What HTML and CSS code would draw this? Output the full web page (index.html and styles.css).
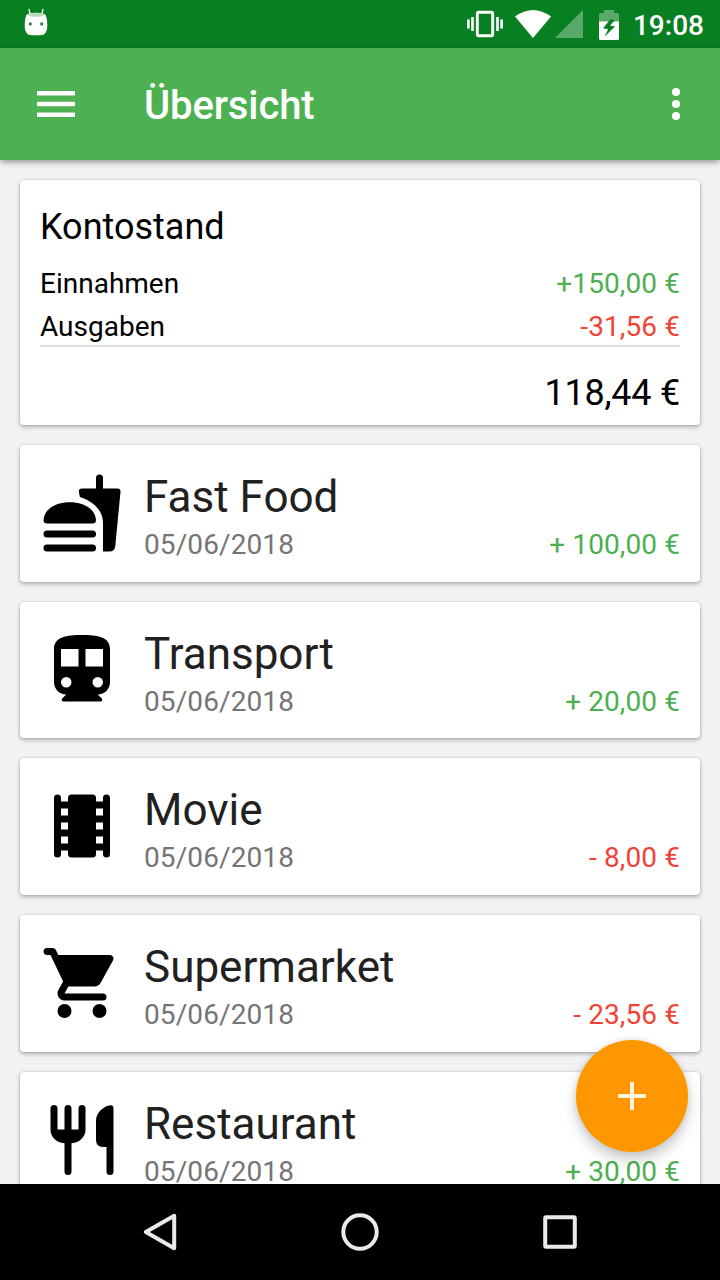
FILE: index.html
```html
<!DOCTYPE html>
<html lang="de">
<head>
<meta charset="utf-8">
<title>Übersicht</title>
<link rel="stylesheet" href="styles.css">
</head>
<body>
<div class="screen">
  <div class="statusbar">
    <svg class="statusbar-robot" width="24" height="28" viewBox="0 0 24 28">
      <path d="M5 1.500l1.300 5M19 1.500l-1.300 5" fill="none" stroke="#fff" stroke-width="1.300" stroke-linecap="round"/>
      <path d="M3.500 6Q12 3.500 20.500 6Q23 7.500 23.300 17Q23.300 25 19.500 26.700Q12 28 4.500 26.700Q.7 25 .7 17Q1 7.500 3.500 6z" fill="#fff"/>
      <ellipse cx="12" cy="6.800" rx="8" ry="1.900" fill="#b7dcbc"/>
      <circle cx="6.300" cy="15.900" r="1.600" fill="#2f7d3a"/><circle cx="17.700" cy="15.900" r="1.600" fill="#2f7d3a"/>
    </svg>
    <div class="statusbar-right">
      <svg class="icon-vibrate" width="36" height="28" viewBox="0 0 36 28" fill="#fff">
        <path d="M0 9.500h2.700v9H0zM4.200 7h2.600v14H4.200zM29.200 7h2.600v14h-2.600zM33.300 9.500H36v9h-2.700z"/>
        <rect x="10.300" y="2.200" width="15.400" height="23.600" rx="1.500" fill="none" stroke="#fff" stroke-width="2.900"/>
      </svg>
      <svg class="icon-wifi" width="36" height="28" viewBox="0 0 36 28"><path d="M0 6.500Q18-6.500 36 6.500L18 28z" fill="#fff"/></svg>
      <svg class="icon-signal" width="28" height="28" viewBox="0 0 28 28"><path d="M28 0v28H0z" fill="#5aa96a"/></svg>
      <svg class="icon-battery" width="20" height="30" viewBox="0 0 20 30">
        <path d="M0 12V4.500Q0 3 1.500 3H5V0h10v3h3.500Q20 3 20 4.500V12z" fill="#5aa96a"/>
        <path d="M0 11.500h20V28.500Q20 30 18.500 30h-17Q0 30 0 28.500z" fill="#fff"/>
        <path d="M11.500 9L4 18.300l5.200.9L5.500 26.700 16 16.500l-5-1 4.700-5.200z" fill="#088022"/>
      </svg>
      <span class="clock">19:08</span>
    </div>
  </div>
  <header class="appbar">
    <svg class="menu-icon" width="38" height="26" viewBox="0 0 38 26"><path d="M0 0h38v4.400H0zM0 10.800h38v4.400H0zM0 21.600h38V26H0z" fill="#fff"/></svg>
    <h1 class="appbar-title">Übersicht</h1>
    <svg class="more-icon" width="8" height="32" viewBox="0 0 8 32" fill="#fff"><circle cx="4" cy="4" r="4"/><circle cx="4" cy="16" r="4"/><circle cx="4" cy="28" r="4"/></svg>
  </header>
  <main class="content">
    <section class="card balance">
      <h2 class="balance-title">Kontostand</h2>
      <div class="balance-row"><span>Einnahmen</span><span class="income">+150,00 €</span></div>
      <div class="balance-row balance-row-last"><span>Ausgaben</span><span class="expense">-31,56 €</span></div>
      <div class="balance-total">118,44 €</div>
    </section>
    <article class="card entry">
      <svg class="entry-icon" viewBox="0 0 24 24">
        <path d="M16 5V2a1 1 0 0 1 2 0v3h4.200q.8 0 .8.900L21.500 21.500Q21.300 23 19.800 23H18v-8c0-2.400-1-4-2.400-5.300-1.200-1.100-2.600-1.800-4.200-2.300L11.100 6Q11 5 12 5z"/>
        <path d="M2 15Q1 15 1 14C1.300 10.500 5 8.950 8.500 8.950S15.700 10.500 16 14Q16 15 15 15z"/>
        <rect x="1" y="17" width="15" height="2" rx="1"/><rect x="1" y="21" width="15" height="2" rx="1"/>
      </svg>
      <div class="entry-body"><h3 class="entry-title">Fast Food</h3><div class="entry-meta"><span class="date">05/06/2018</span><span class="income">+ 100,00 €</span></div></div>
    </article>
    <article class="card entry">
      <svg class="entry-icon" viewBox="0 0 24 24"><path fill-rule="evenodd" d="M12 2c-4.420 0-8 .5-8 4v9.500C4 17.430 5.570 19 7.500 19l-1.150 1.150c-.32.32-.1.850.35.850h10.600c.450 0 .670-.53.350-.850L16.500 19c1.930 0 3.500-1.570 3.500-3.500V6c0-3.500-3.580-4-8-4zM7.500 17a1.500 1.500 0 1 1 0-3 1.500 1.500 0 0 1 0 3zM11 11H6V6h5zM16.500 17a1.500 1.500 0 1 1 0-3 1.500 1.500 0 0 1 0 3zM18 11h-5V6h5z"/></svg>
      <div class="entry-body"><h3 class="entry-title">Transport</h3><div class="entry-meta"><span class="date">05/06/2018</span><span class="income">+ 20,00 €</span></div></div>
    </article>
    <article class="card entry">
      <svg class="entry-icon" viewBox="0 0 24 24"><path d="M4 4a1 1 0 0 1 2 0v16a1 1 0 0 1-2 0zM18 4a1 1 0 0 1 2 0v16a1 1 0 0 1-2 0zM5 5h14v2H5zM5 9h14v2H5zM5 13h14v2H5zM5 17h14v2H5z"/><rect x="8" y="3" width="8" height="18" rx="1"/></svg>
      <div class="entry-body"><h3 class="entry-title">Movie</h3><div class="entry-meta"><span class="date">05/06/2018</span><span class="expense">- 8,00 €</span></div></div>
    </article>
    <article class="card entry">
      <svg class="entry-icon" viewBox="0 0 24 24"><circle cx="7" cy="20" r="2"/><circle cx="17" cy="20" r="2"/><path d="M1 3c0 .55.450 1 1 1h1l3.600 7.590-1.350 2.440C4.520 15.370 5.480 17 7 17h11a1 1 0 0 0 0-2H7l1.100-2h7.450c.750 0 1.410-.41 1.750-1.030l3.580-6.490A1 1 0 0 0 20 4H5.210l-.67-1.430A1 1 0 0 0 3.640 2H2c-.55 0-1 .450-1 1z"/></svg>
      <div class="entry-body"><h3 class="entry-title">Supermarket</h3><div class="entry-meta"><span class="date">05/06/2018</span><span class="expense">- 23,56 €</span></div></div>
    </article>
    <article class="card entry">
      <svg class="entry-icon" viewBox="0 0 24 24"><path d="M3 3a1 1 0 0 1 2 0v6h2V3a1 1 0 0 1 2 0v6h2V3a1 1 0 0 1 2 0v6c0 2.100-1.700 3.800-4 3.920V21a1 1 0 0 1-2 0v-8.080C4.700 12.800 3 11.100 3 9zM16 6.500C16 4.300 18.100 2.300 20.200 2.100Q21 2.100 21 3v18a1 1 0 0 1-2 0v-7h-1q-2 0-2-2z"/></svg>
      <div class="entry-body"><h3 class="entry-title">Restaurant</h3><div class="entry-meta"><span class="date">05/06/2018</span><span class="income">+ 30,00 €</span></div></div>
    </article>
    <button class="fab" aria-label="Neu"><svg width="28" height="28" viewBox="0 0 28 28"><path d="M12 0h4v12h12v4H16v12h-4V16H0v-4h12z" fill="#fff3dc"/></svg></button>
  </main>
  <nav class="navbar">
    <svg width="40" height="40" viewBox="0 0 40 40"><path d="M34.200 3.800v32.400L5.800 20z"/></svg>
    <svg width="40" height="40" viewBox="0 0 40 40"><circle cx="20" cy="20" r="16.700"/></svg>
    <svg width="40" height="40" viewBox="0 0 40 40"><rect x="5.200" y="5.200" width="29.600" height="29.600" rx="1"/></svg>
  </nav>
</div>
</body>
</html>
```

FILE: styles.css
```css
* { box-sizing: border-box; }
body { margin: 0; font-family: Roboto, "Liberation Sans", sans-serif; background: #f2f2f2; }
h1, h2, h3 { margin: 0; font-weight: 400; }
svg { display: block; flex: none; }

.screen { width: 720px; height: 1280px; display: flex; flex-direction: column; overflow: hidden; }

.statusbar { height: 48px; flex: none; background: #088022; display: flex; justify-content: space-between; align-items: flex-start; padding: 8px 16px 0 24px; }
.statusbar-right { display: flex; align-items: flex-start; padding-top: 2px; }
.icon-wifi { margin-left: 12px; }
.icon-signal { margin-left: 4px; }
.icon-battery { margin-left: 16px; }
.clock { margin-left: 14px; color: #fff; font-size: 28px; font-weight: 500; line-height: 32px; }

.appbar { height: 112px; flex: none; z-index: 1; background: #4db151; display: flex; align-items: center; padding: 0 40px 0 37px; box-shadow: 0 2px 6px rgba(0, 0, 0, .4); }
.appbar-title { margin: 4px auto 0 69px; color: #fff; font-size: 40px; font-weight: 500; line-height: 48px; letter-spacing: -.1px; }

.content { height: 1024px; flex: none; position: relative; overflow: hidden; background: #f2f2f2; padding: 20px; display: flex; flex-direction: column; gap: 20px; }
.card { flex: none; background: #fff; border-radius: 4px; box-shadow: 0 2px 4px rgba(0, 0, 0, .28), 0 0 2px rgba(0, 0, 0, .18); }

.balance { height: 245px; padding: 26px 20px 0; color: #000; }
.balance-title { font-size: 36px; line-height: 42px; margin-bottom: 19px; }
.balance-row { display: flex; justify-content: space-between; font-size: 28px; line-height: 33px; margin-bottom: 10px; }
.balance-row-last { height: 37px; margin-bottom: 25px; border-bottom: 2px solid #dcdcdc; }
.balance-total { font-size: 36px; line-height: 42px; text-align: right; letter-spacing: -.25px; }

.income { color: #4caf50; letter-spacing: .1px; }
.expense { color: #f04336; letter-spacing: .1px; }

.entry { height: 136.670px; display: flex; gap: 20px; padding: 26px 20px 0; }
.entry-icon { width: 84px; height: 84px; fill: #000; }
.entry-body { flex: 1; }
.entry-title { font-size: 44px; line-height: 52px; margin-bottom: 5px; color: #212121; }
.entry-meta { display: flex; justify-content: space-between; font-size: 28px; line-height: 33px; }
.date { color: #757575; letter-spacing: .1px; }

.fab { position: absolute; right: 32px; bottom: 32px; width: 112px; height: 112px; border: 0; border-radius: 50%; background: #ff9800; display: flex; align-items: center; justify-content: center; box-shadow: 0 8px 14px rgba(0, 0, 0, .2), 0 0 6px rgba(0, 0, 0, .1); }

.navbar { height: 96px; flex: none; z-index: 1; background: #000; display: flex; align-items: center; justify-content: center; gap: 160px; }
.navbar svg { fill: none; stroke: #eaeaea; stroke-width: 4; stroke-linejoin: round; }
```
